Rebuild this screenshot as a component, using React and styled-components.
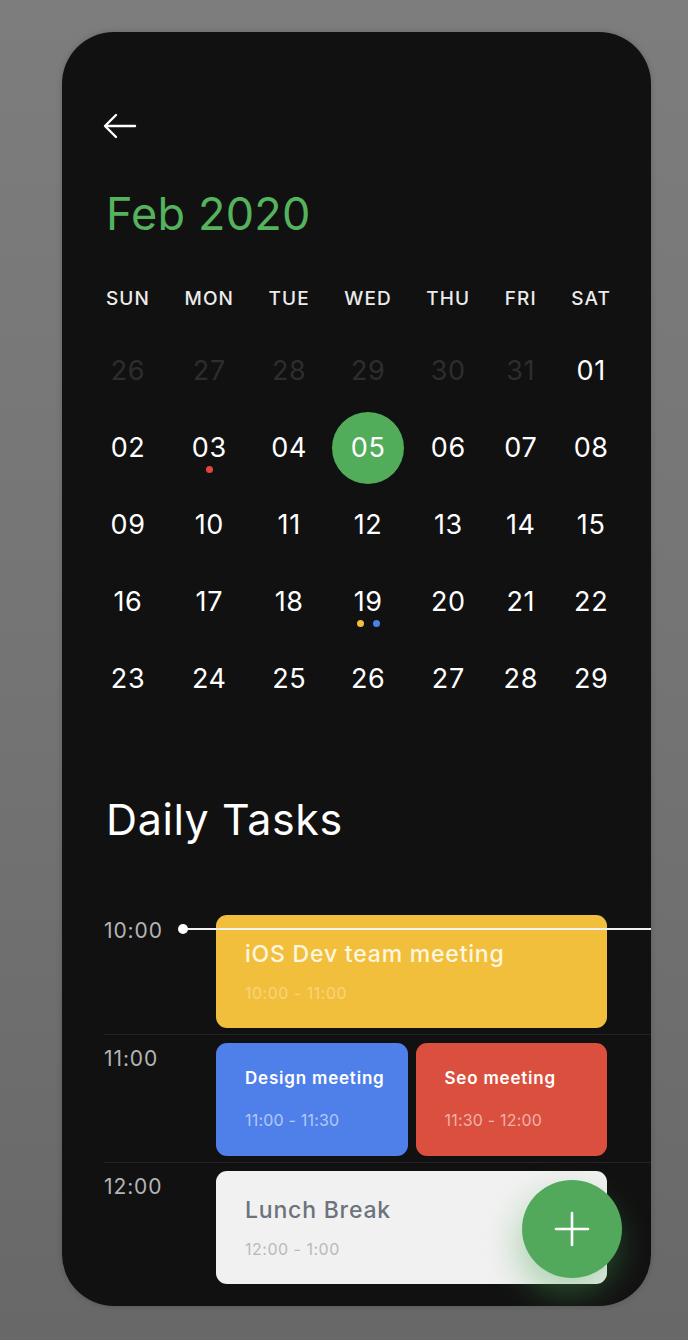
import React from 'react'
import styled, { createGlobalStyle } from 'styled-components'

const GlobalStyle = createGlobalStyle`
    html, body {
        margin: 0;
        padding: 0;
    }
    body {
        background: linear-gradient(180deg, #7d7d7d 0%, #747474 50%, #686868 100%);
        min-height: 1340px;
        font-family: 'Inter', 'Liberation Sans', sans-serif;
    }
`

const Page = styled.div`
    width: 688px;
    height: 1340px;
    padding: 32px 0 0 62px;
    box-sizing: border-box;
`

const Phone = styled.div`
    position: relative;
    width: 589px;
    height: 1274px;
    background: #111111;
    border-radius: 52px;
    overflow: hidden;
    box-sizing: border-box;
    padding: 0 0 0 44px;
    box-shadow: 0 0 6px rgba(0,0,0,0.18);
`

const BackButton = styled.button`
    display: block;
    margin: 80px 0 0 -4px;
    padding: 0;
    width: 36px;
    height: 28px;
    background: none;
    border: none;
    color: #ffffff;
    cursor: pointer;
`

const Month = styled.h1`
    margin: 47px 0 0 0;
    font-size: 45px;
    line-height: 54px;
    font-weight: 400;
    color: #55b35d;
    letter-spacing: 0.2px;
`

const Calendar = styled.div`
    display: flex;
    justify-content: space-between;
    width: 505px;
    margin-top: 47px;
`

const DayColumn = styled.div`
    display: flex;
    flex-direction: column;
    align-items: center;
`

const WeekDay = styled.div`
    font-size: 19px;
    line-height: 22px;
    font-weight: 500;
    color: #ececec;
    letter-spacing: 1.1px;
    margin-bottom: 22px;
`

// zero-width cell: the 72px circle overflows evenly on both sides
const DateCell = styled.div`
    position: relative;
    width: 0;
    height: 77px;
    display: flex;
    align-items: center;
    justify-content: center;
`

const DateNum = styled.span`
    flex-shrink: 0;
    display: flex;
    align-items: center;
    justify-content: center;
    width: 72px;
    height: 72px;
    border-radius: 50%;
    font-size: 27px;
    font-weight: 400;
    letter-spacing: 0.6px;
    color: ${props => props.$muted ? '#2d2d2d' : '#ffffff'};
    background: ${props => props.$active ? '#52ad5a' : 'transparent'};
`

const Dots = styled.div`
    position: absolute;
    left: 0;
    right: 0;
    top: 57px;
    display: flex;
    justify-content: center;
    gap: 9px;
`

const Dot = styled.span`
    flex-shrink: 0;
    width: 7px;
    height: 7px;
    border-radius: 50%;
    background: ${props => props.$color};
`

const SectionTitle = styled.h2`
    margin: 77px 0 0 0;
    font-size: 43px;
    line-height: 50px;
    font-weight: 400;
    color: #ffffff;
    letter-spacing: 0.6px;
`

const Timeline = styled.div`
    position: relative;
    margin: 71px 0 0 -2px;
`

const NowLine = styled.div`
    position: absolute;
    left: 78px;
    right: 0;
    top: 13px;
    height: 2px;
    background: #f2f2f2;
    z-index: 2;

    &::before {
        content: '';
        position: absolute;
        left: -4px;
        top: -4px;
        width: 10px;
        height: 10px;
        border-radius: 50%;
        background: #ffffff;
    }
`

const HourRow = styled.div`
    display: flex;
    padding-bottom: 6px;
    margin-bottom: 8px;
    border-bottom: 1px solid #232323;

    &:last-of-type {
        border-bottom: none;
    }
`

const HourLabel = styled.div`
    width: 112px;
    flex-shrink: 0;
    padding-top: 4px;
    font-size: 21px;
    line-height: 24px;
    color: #b4b4b4;
    letter-spacing: 0.9px;
`

const Cards = styled.div`
    display: flex;
    gap: 8px;
    width: 391px;
`

const TaskCard = styled.div`
    flex: 1;
    height: 113px;
    border-radius: 11px;
    background: ${props => props.$bg};
    box-sizing: border-box;
    padding: ${props => props.$small ? '24px 0 0 29px' : '25px 0 0 29px'};
`

const TaskTitle = styled.div`
    font-size: ${props => props.$small ? '17px' : '23px'};
    line-height: ${props => props.$small ? '22px' : '28px'};
    font-weight: ${props => props.$small ? 600 : 500};
    letter-spacing: ${props => props.$small ? '0.8px' : '0.8px'};
    color: ${props => props.$color};
    white-space: nowrap;
`

const TaskTime = styled.div`
    margin-top: ${props => props.$small ? '21px' : '15px'};
    font-size: 16px;
    line-height: 20px;
    letter-spacing: ${props => props.$small ? '0.2px' : '0.5px'};
    color: ${props => props.$color};
`

const Fab = styled.button`
    position: absolute;
    right: 29px;
    bottom: 28px;
    width: 100px;
    height: 98px;
    border-radius: 50%;
    border: none;
    background: #52a95b;
    display: flex;
    align-items: center;
    justify-content: center;
    box-shadow: -4px 16px 34px rgba(82, 169, 91, 0.42);
    z-index: 3;
`

const weeks = [
    { day: 'SUN', dates: ['26', '02', '09', '16', '23'] },
    { day: 'MON', dates: ['27', '03', '10', '17', '24'] },
    { day: 'TUE', dates: ['28', '04', '11', '18', '25'] },
    { day: 'WED', dates: ['29', '05', '12', '19', '26'] },
    { day: 'THU', dates: ['30', '06', '13', '20', '27'] },
    { day: 'FRI', dates: ['31', '07', '14', '21', '28'] },
    { day: 'SAT', dates: ['01', '08', '15', '22', '29'] },
]

// dots under dates that have events
const events = {
    '03': ['#e0463b'],
    '19': ['#f2c03e', '#4f80ea'],
}

const hours = [
    {
        time: '10:00',
        tasks: [
            { title: 'iOS Dev team meeting', time: '10:00 - 11:00', bg: '#f2bf3d', titleColor: '#fff6df', timeColor: '#f7d57b' },
        ],
    },
    {
        time: '11:00',
        small: true,
        tasks: [
            { title: 'Design meeting', time: '11:00 - 11:30', bg: '#4f80ea', titleColor: '#ffffff', timeColor: '#b3c9f7' },
            { title: 'Seo meeting', time: '11:30 - 12:00', bg: '#db4f3e', titleColor: '#ffffff', timeColor: '#f0b2aa' },
        ],
    },
    {
        time: '12:00',
        tasks: [
            { title: 'Lunch Break', time: '12:00 - 1:00', bg: '#f1f1f1', titleColor: '#6c737d', timeColor: '#b9b9b9' },
        ],
    },
]

const App = () => {
    return (
        <Page>
            <GlobalStyle />
            <Phone>
                <BackButton aria-label="back">
                    <svg width="36" height="28" viewBox="0 0 36 28" fill="none" stroke="currentColor" strokeWidth="2.4" strokeLinecap="round" strokeLinejoin="round">
                        <path d="M33 14H4" />
                        <path d="M14 3L3 14l11 11" />
                    </svg>
                </BackButton>

                <Month>Feb 2020</Month>

                <Calendar>
                    {weeks.map(col => (
                        <DayColumn key={col.day}>
                            <WeekDay>{col.day}</WeekDay>
                            {col.dates.map((d, i) => {
                                const muted = i === 0 && col.day !== 'SAT'
                                const dots = !muted && events[d]
                                return (
                                    <DateCell key={d + i}>
                                        <DateNum $muted={muted} $active={d === '05'}>{d}</DateNum>
                                        {dots && (
                                            <Dots>
                                                {dots.map(c => <Dot key={c} $color={c} />)}
                                            </Dots>
                                        )}
                                    </DateCell>
                                )
                            })}
                        </DayColumn>
                    ))}
                </Calendar>

                <SectionTitle>Daily Tasks</SectionTitle>

                <Timeline>
                    <NowLine />
                    {hours.map(h => (
                        <HourRow key={h.time}>
                            <HourLabel>{h.time}</HourLabel>
                            <Cards>
                                {h.tasks.map(t => (
                                    <TaskCard key={t.title} $bg={t.bg} $small={h.small}>
                                        <TaskTitle $small={h.small} $color={t.titleColor}>{t.title}</TaskTitle>
                                        <TaskTime $small={h.small} $color={t.timeColor}>{t.time}</TaskTime>
                                    </TaskCard>
                                ))}
                            </Cards>
                        </HourRow>
                    ))}
                </Timeline>

                <Fab aria-label="add task">
                    <svg width="38" height="38" viewBox="0 0 38 38" stroke="#ffffff" strokeWidth="2.6" strokeLinecap="round">
                        <path d="M19 3v32M3 19h32" />
                    </svg>
                </Fab>
            </Phone>
        </Page>
    )
}

export default App
